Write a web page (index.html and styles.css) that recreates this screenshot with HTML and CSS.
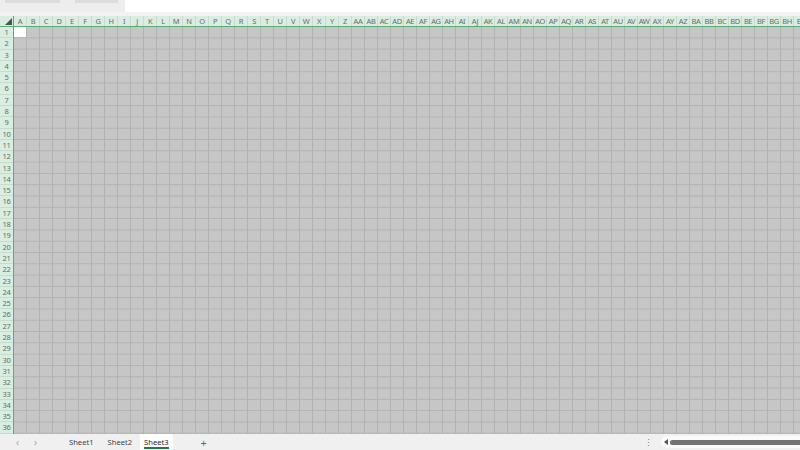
FILE: index.html
```html
<!DOCTYPE html>
<html lang="en">
  <head>
    <meta charset="UTF-8" />
    <meta name="viewport" content="width=device-width, initial-scale=1.0" />
    <title>Sheet3</title>
    <link rel="stylesheet" href="styles.css">
  </head>
  <body>
    <div class="topbar">
      <div class="tool-slot"></div>
      <div class="tool-slot short"></div>
      <div class="formula"></div>
    </div>
    <div class="spacer"></div>

    <div class="sheet">
      <div class="col-head">
        <div class="corner"><span class="corner-mark"></span></div>
        <div class="col-labels" id="colLabels"></div>
      </div>
      <div class="sheet-body">
        <div class="row-labels" id="rowLabels"></div>
        <div class="cells">
          <div class="active-cell"></div>
        </div>
      </div>
    </div>

    <div class="tabbar">
      <div class="nav">
        <span class="nav-btn">&#8249;</span>
        <span class="nav-btn">&#8250;</span>
      </div>
      <div class="tabs">
        <span class="tab">Sheet1</span>
        <span class="tab">Sheet2</span>
        <span class="tab active">Sheet3</span>
      </div>
      <span class="add-tab">+</span>
      <span class="more">&#8942;</span>
      <div class="hscroll">
        <span class="hscroll-arrow"></span>
        <span class="hscroll-thumb"></span>
      </div>
    </div>

    <script>
      // column letters A, B, ... Z, AA, AB ...
      function colName(n) {
        let s = "";
        n++;
        while (n > 0) {
          const r = (n - 1) % 26;
          s = String.fromCharCode(65 + r) + s;
          n = Math.floor((n - 1) / 26);
        }
        return s;
      }

      const cols = document.getElementById("colLabels");
      for (let i = 0; i < 61; i++) {
        const c = document.createElement("span");
        c.className = "col-label";
        c.textContent = colName(i);
        cols.appendChild(c);
      }

      const rows = document.getElementById("rowLabels");
      for (let i = 1; i <= 36; i++) {
        const r = document.createElement("span");
        r.className = "row-label";
        r.textContent = i;
        rows.appendChild(r);
      }
    </script>
  </body>
</html>
```

FILE: styles.css
```css
body {
  margin: 0;
  width: 800px;
  height: 450px;
  overflow: hidden;
  font-family: "Noto Sans", "Open Sans", sans-serif;
  background: #f0f0f0;
  display: flex;
  flex-direction: column;
}

/* top toolbar strip */
.topbar {
  height: 12px;
  display: flex;
  background: #ededed;
}

.tool-slot {
  width: 55px;
  height: 3px;
  margin-left: 5px;
  background: #dcdcdc;
}

.tool-slot.short {
  width: 43px;
  margin-left: 15px;
}

.formula {
  flex: 1;
  margin-left: 7px;
  background: #ffffff;
}

.spacer {
  height: 4px;
  background: #f2f2f2;
}

/* grid */
.sheet {
  display: flex;
  flex-direction: column;
  height: 418px;
  overflow: hidden;
}

.col-head {
  display: flex;
  height: 10px;
  border-bottom: 1px solid #5fa878;
  background: #d9ede0;
}

.corner {
  width: 14px;
  flex-shrink: 0;
  position: relative;
  border-right: 1px solid #5fa878;
  box-sizing: border-box;
}

.corner-mark {
  position: absolute;
  right: 1px;
  bottom: 1px;
  width: 0;
  height: 0;
  border-left: 7px solid transparent;
  border-bottom: 7px solid #3e5a48;
}

.col-labels {
  display: flex;
  white-space: nowrap;
}

.col-label {
  flex: 0 0 13px;
  width: 13px;
  box-sizing: border-box;
  border-right: 1px solid #c6ddce;
  font-size: 7.5px;
  line-height: 10px;
  text-align: center;
  color: #637067;
  overflow: hidden;
  letter-spacing: -0.4px;
}

.sheet-body {
  display: flex;
  flex: 1;
}

.row-labels {
  width: 14px;
  flex-shrink: 0;
  box-sizing: border-box;
  border-right: 1px solid #5fa878;
  background: #d9ede0;
  display: flex;
  flex-direction: column;
}

.row-label {
  height: 11.3px;
  box-sizing: border-box;
  border-bottom: 1px solid #c6ddce;
  font-size: 7.5px;
  line-height: 11px;
  text-align: center;
  color: #637067;
  flex-shrink: 0;
  letter-spacing: -0.3px;
}

.cells {
  flex: 1;
  position: relative;
  background-color: #c6c6c6;
  background-image:
    linear-gradient(to right, transparent 12px, #b2b2b2 12px),
    linear-gradient(to bottom, transparent 10.3px, #b2b2b2 10.3px);
  background-size: 13px 11.3px;
}

.active-cell {
  position: absolute;
  left: 0;
  top: 0;
  width: 12px;
  height: 10px;
  background: #ffffff;
}

/* sheet tabs */
.tabbar {
  height: 16px;
  display: flex;
  align-items: center;
  background: #f0f0f0;
  font-size: 7.6px;
  color: #444;
}

.nav {
  display: flex;
  gap: 15px;
  margin-left: 16px;
  width: 44px;
}

.nav-btn {
  color: #a8a8a8;
  font-size: 10px;
}

.tabs {
  display: flex;
  margin-left: 3px;
  height: 100%;
}

.tab {
  padding: 0 6px;
  display: flex;
  align-items: center;
  color: #444;
  margin-right: 2px;
}

.tab.active {
  background: #ffffff;
  color: #1f1f1f;
  position: relative;
  padding: 0 4px;
  margin-left: 0;
}

.tab.active::after {
  content: "";
  position: absolute;
  left: 4px;
  right: 4px;
  bottom: 1px;
  height: 2px;
  background: #1f7a45;
}

.add-tab {
  margin-left: 26px;
  font-size: 11px;
  color: #666;
}

.more {
  margin-left: auto;
  color: #777;
  font-size: 9px;
  margin-right: 8px;
}

.hscroll {
  width: 139px;
  height: 12px;
  background: #fbfbfb;
  border-radius: 6px 0 0 6px;
  display: flex;
  align-items: center;
}

.hscroll-arrow {
  width: 0;
  height: 0;
  margin-left: 3px;
  border-top: 3px solid transparent;
  border-bottom: 3px solid transparent;
  border-right: 4px solid #555;
}

.hscroll-thumb {
  flex: 1;
  height: 5px;
  margin-left: 2px;
  background: #737373;
  border-radius: 3px 0 0 3px;
}
```
